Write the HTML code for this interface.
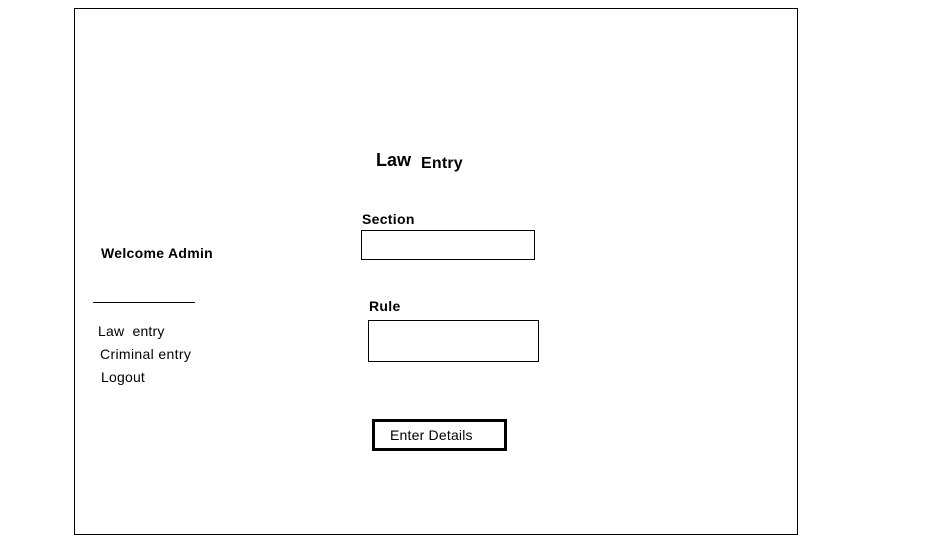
<!DOCTYPE html>
<html><head><meta charset="utf-8"><style>
body{margin:0;width:936px;height:560px;background:#fff;position:relative;overflow:hidden;font-family:"Liberation Sans",sans-serif;color:#000}
.a{position:absolute;white-space:pre;line-height:16px}
.b{font-weight:bold}
.box{position:absolute;border:1px solid #000;box-sizing:border-box}
</style></head><body>
<div class="box" style="left:74px;top:8px;width:724px;height:527px"></div>
<div class="a b" style="left:376px;top:150px;font-size:18px;line-height:20px">Law</div>
<div class="a b" style="left:421px;top:155px;font-size:16px;line-height:18px;letter-spacing:0.2px">Entry</div>
<div class="a b" style="left:362px;top:211px;font-size:14px;letter-spacing:0.3px">Section</div>
<div class="box" style="left:361px;top:230px;width:174px;height:30px"></div>
<div class="a b" style="left:101px;top:245px;font-size:14px;letter-spacing:0.3px">Welcome Admin</div>
<div style="position:absolute;left:93px;top:302px;width:102px;height:1px;background:#000"></div>
<div class="a b" style="left:369px;top:298px;font-size:14px;letter-spacing:0.3px">Rule</div>
<div class="box" style="left:368px;top:320px;width:171px;height:42px"></div>
<div class="a" style="left:98px;top:323px;font-size:14px;letter-spacing:0.2px">Law  entry</div>
<div class="a" style="left:100px;top:346px;font-size:14px;letter-spacing:0.35px">Criminal entry</div>
<div class="a" style="left:101px;top:369px;font-size:14px;letter-spacing:0.2px">Logout</div>
<div class="box" style="left:372px;top:419px;width:135px;height:32px;border-width:3px"></div>
<div class="a" style="left:390px;top:427px;font-size:14px;letter-spacing:0.2px">Enter Details</div>
</body></html>
